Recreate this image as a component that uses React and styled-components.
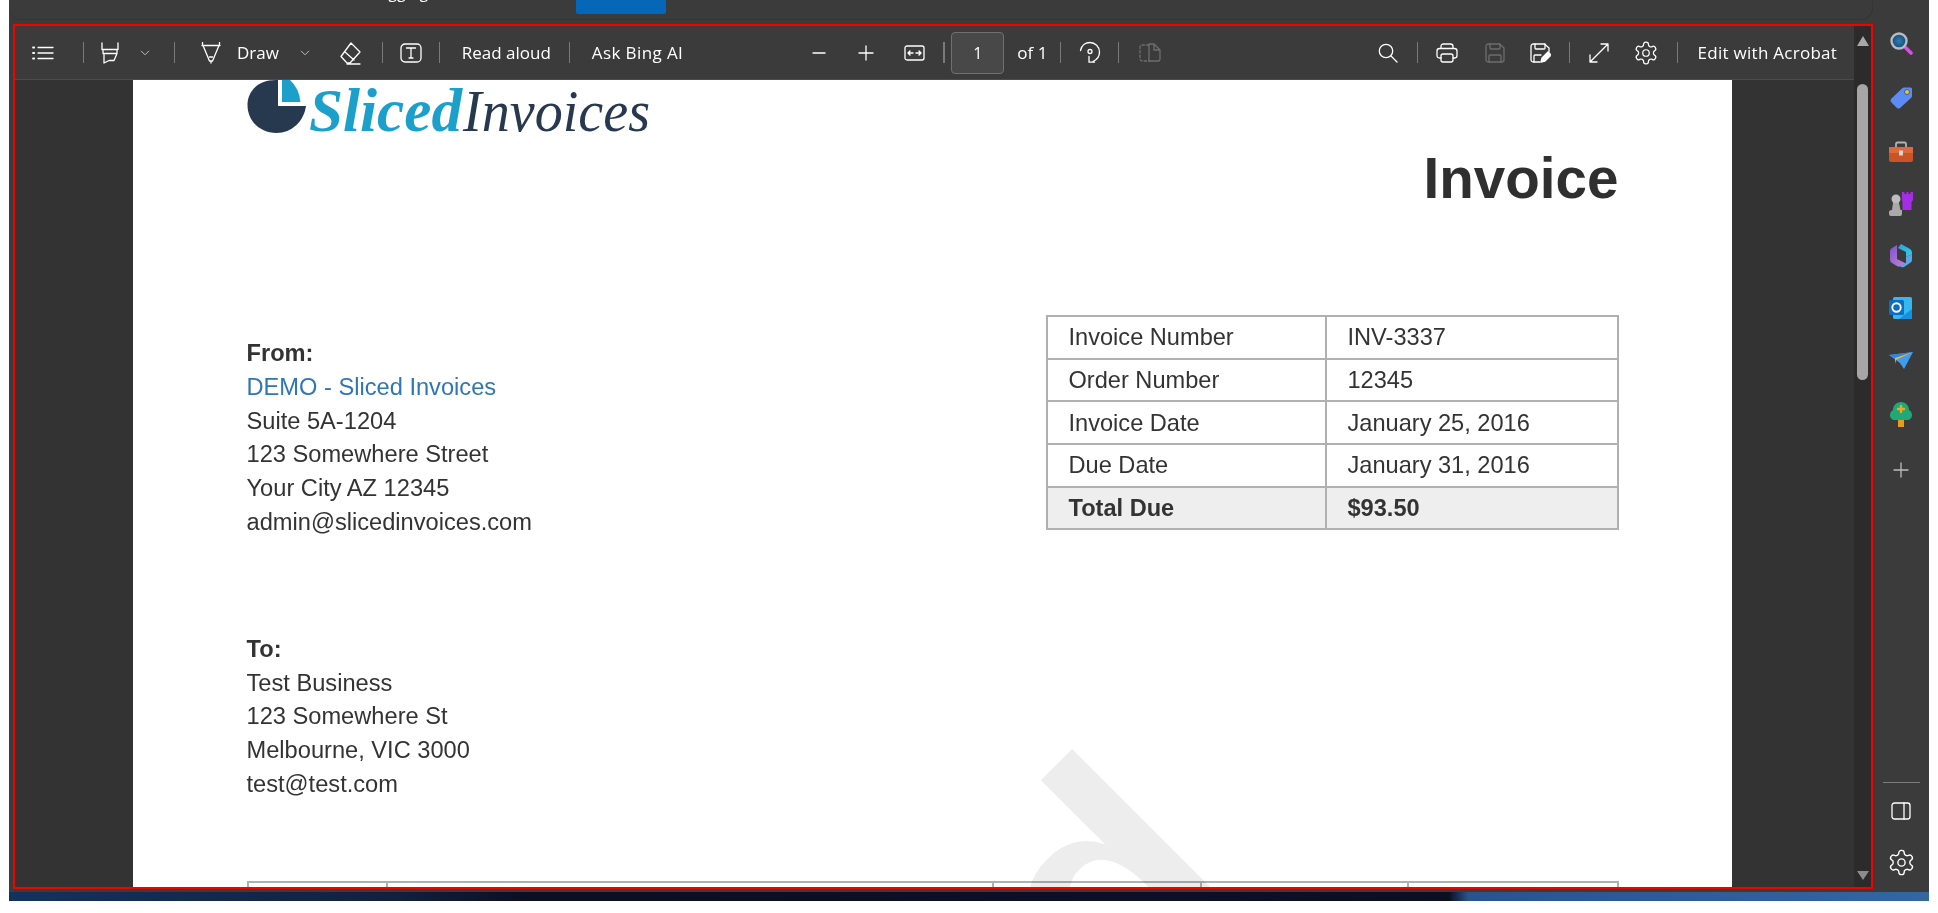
import React from "react";
import styled, { createGlobalStyle } from "styled-components";

const Global = createGlobalStyle`
  html, body { margin: 0; padding: 0; background: #fff; overflow: hidden; }
  #root { width: 1938px; height: 913px; }
`;

const Shell = styled.div`
  margin-left: 9px;
  width: 1920px;
  height: 901px;
  display: flex;
  flex-direction: column;
  overflow: hidden;
`;
const Upper = styled.div`
  height: 892px;
  display: flex;
  background: #3b3b3b;
`;
const LeftCol = styled.div`
  width: 1864px;
  display: flex;
  flex-direction: column;
`;
const TopStrip = styled.div`
  height: 20px;
  flex: none;
  margin-bottom: 4px;
  border-bottom: 1px solid #343434;
  border-right: 1px solid #343434;
  border-bottom-right-radius: 12px;
  border-bottom-left-radius: 12px;
  box-sizing: border-box;
  display: flex;
  overflow: hidden;
  position: relative;
`;
const TabText = styled.span`
  margin: -18px 0 0 339px;
  width: 228px;
  font: 16px/20px "Open Sans", sans-serif;
  color: #fff;
`;
const BlueTab = styled.div`
  width: 90px;
  height: 14px;
  background: #0667b8;
  border-radius: 0 0 2px 2px;
`;
const Frame = styled.div`
  margin-left: 4px;
  height: 865px;
  box-sizing: border-box;
  border: 2px solid #f40000;
  display: flex;
  background: #333;
`;
const MainCol = styled.div`
  flex: 1;
  min-width: 0;
  display: flex;
  flex-direction: column;
`;
const Toolbar = styled.div`
  height: 54px;
  flex: none;
  box-sizing: border-box;
  background: #3b3b3b;
  border-bottom: 1px solid #4c4c4c;
  display: flex;
  align-items: center;
  color: #fff;
  font: 17px/20px "Open Sans", sans-serif;
`;
const Tool = styled.span`
  flex: none;
  margin-left: ${(p) => p.$at}px;
  display: flex;
  color: ${(p) => (p.$off ? "#6e6e6e" : "#fff")};
`;
const Sep = styled.span`
  flex: none;
  margin-left: ${(p) => p.$at}px;
  width: ${(p) => p.$w || 1}px;
  height: 21px;
  background: #7a7a7a;
`;
const Label = styled.span`
  flex: none;
  margin-left: ${(p) => p.$at}px;
  width: ${(p) => p.$w}px;
  white-space: nowrap;
  letter-spacing: ${(p) => p.$ls || 0}px;
`;
const PageInput = styled.span`
  flex: none;
  margin-left: ${(p) => p.$at}px;
  width: 53px;
  height: 42px;
  box-sizing: border-box;
  background: #484848;
  border: 1px solid #707070;
  border-radius: 4px;
  display: flex;
  align-items: center;
  justify-content: center;
  font-size: 16px;
`;
const Viewer = styled.div`
  flex: 1;
  min-height: 0;
  padding: 0 122.5px 0 117.5px;
  background: #333;
  display: flex;
  overflow: hidden;
`;
const Page = styled.div`
  flex: 1;
  background: #fff;
  padding: 0 113px 0 114px;
  box-sizing: border-box;
  position: relative;
  overflow: hidden;
  font-family: "Liberation Sans", Arial, sans-serif;
  color: #333;
`;
const LogoSvg = styled.svg`
  display: block;
  width: 410px;
  height: 58px;
`;
const Title = styled.h1`
  margin: 9px 0 0;
  text-align: right;
  font: 700 56.600px/64px "Liberation Sans", Arial, sans-serif;
  color: #2f2f2f;
`;
const Columns = styled.div`
  margin-top: 104px;
  display: flex;
  justify-content: space-between;
  align-items: flex-start;
`;
const Address = styled.div`
  margin-top: ${(p) => p.$top || 0}px;
  font-size: 23.65px;
  line-height: 33.8px;
`;
const Strong = styled.div`
  font-weight: 700;
`;
const Link = styled.div`
  color: #2f76b5;
`;
const InfoTable = styled.table`
  width: 571px;
  border-collapse: collapse;
  font-size: 23.6px;
  line-height: 28px;
  table-layout: fixed;
`;
const Cell = styled.td`
  height: 42.7px;
  padding: 0 0 0 21px;
  box-sizing: border-box;
  border: 2px solid #b0b0b0;
  font-weight: ${(p) => (p.$total ? 700 : 400)};
  background: ${(p) => (p.$total ? "#eeeeee" : "#fff")};
`;
const Watermark = styled.div`
  position: absolute;
  left: 788px;
  top: 765px;
  font: 700 323px/1 "Liberation Sans", Arial, sans-serif;
  color: #ededed;
  white-space: nowrap;
  transform: rotate(-45deg);
  transform-origin: 0 0;
  mix-blend-mode: multiply;
  pointer-events: none;
`;
const ItemsTable = styled.div`
  margin-top: 79.500px;
  height: 40px;
  box-sizing: border-box;
  border: 2px solid #b0b0b0;
  border-bottom: none;
  display: grid;
  grid-template-columns: 137px 606px 208px 207px 1fr;
`;
const ItemCol = styled.div`
  border-left: ${(p) => (p.$first ? "none" : "2px solid #b0b0b0")};
`;
const Track = styled.div`
  width: 17px;
  flex: none;
  background: #2b2b2b;
  display: flex;
  flex-direction: column;
  align-items: center;
`;
const ArrowUp = styled.div`
  margin-top: 10px;
  width: 0;
  height: 0;
  border-left: 6.5px solid transparent;
  border-right: 6.5px solid transparent;
  border-bottom: 10px solid #a8a8a8;
`;
const Thumb = styled.div`
  margin-top: 38px;
  width: 11px;
  height: 296px;
  background: #a6a6a6;
  border-radius: 6px;
`;
const ArrowDown = styled.div`
  margin-top: auto;
  margin-bottom: 7px;
  width: 0;
  height: 0;
  border-left: 6.5px solid transparent;
  border-right: 6.5px solid transparent;
  border-top: 9px solid #8c8c8c;
`;
const Sidebar = styled.div`
  width: 56px;
  flex: none;
  display: flex;
  flex-direction: column;
  align-items: center;
`;
const SideIcon = styled.span`
  display: flex;
  flex: none;
  margin-top: ${(p) => p.$gap}px;
  margin-bottom: ${(p) => p.$bottom || 0}px;
  color: ${(p) => p.$color || "#fff"};
`;
const SideRule = styled.div`
  margin-top: auto;
  width: 37px;
  height: 1px;
  flex: none;
  background: #7c7c7c;
`;
const Wallpaper = styled.div`
  height: 9px;
  flex: none;
  background: linear-gradient(90deg, #13335c 0, #10213f 20%, #0a0f22 27%, #0a0f22 30%, #0b1028 60%, #0a0f22 75%, #27558a 76%, #33679e 100%);
`;

const S = (p) => (
  <svg width={p.w || 24} height={p.h || 24} viewBox={`0 0 ${p.w || 24} ${p.h || 24}`} fill="none" stroke="currentColor" strokeWidth={p.sw || 1.3} strokeLinecap="round" strokeLinejoin="round">
    {p.children}
  </svg>
);

const ListIcon = () => (
  <S w={22} h={18}>
    <path d="M1 3.5h1.2M1 9h1.2M1 14.5h1.2" strokeWidth="1.8" />
    <path d="M6 3.5h15M6 9h15M6 14.5h15" />
  </S>
);
const Highlighter = () => (
  <S w={20} h={22}>
    <path d="M2 1v6.5h16V1M3 7.5v4h14v-4M4 11.5V21l5-2.5h5l3-7" />
  </S>
);
const Chevron = () => (
  <svg width="10" height="6" viewBox="0 0 10 6" fill="none" stroke="#bdbdbd" strokeWidth="1">
    <path d="M1 .8l4 4 4-4" />
  </svg>
);
const Pen = () => (
  <S w={20} h={22}>
    <path d="M1 3.5h18M2 3.5L8.5 19h3L18 3.5M8.5 15h3M10 19v2M18.5 .5v3M1.5 .5v3" />
  </S>
);
const Eraser = () => (
  <S w={22} h={24}>
    <path d="M12 2l9 9-10 11H8L2 15.500zM6 11l9 8M8 23h13" />
  </S>
);
const TextBox = () => (
  <S w={22} h={20}>
    <rect x="1" y="1" width="20" height="18" rx="4" />
    <path d="M6.500 5h9M11 5v10M9 15h4" />
  </S>
);
const Minus = () => (
  <S w={14} h={4}>
    <path d="M1 2h12" />
  </S>
);
const Plus = () => (
  <S w={16} h={16}>
    <path d="M1 8h14M8 1v14" />
  </S>
);
const FitWidth = () => (
  <S w={21} h={16}>
    <rect x="1" y="1" width="19" height="14" rx="2" />
    <path d="M4 8h5M4 8l2-2M4 8l2 2M12 8h5M17 8l-2-2M17 8l-2 2" strokeWidth="1.400" />
  </S>
);
const Rotate = () => (
  <S w={22} h={23}>
    <path d="M1.500 9.500C2.500 4.500 6.500 1.500 11 1.500c5 0 9.500 4 9.500 9.500 0 4.500-3 8-6.500 9.500M10 15.500v5.700h5.500" />
    <circle cx="11" cy="10.500" r="2" />
  </S>
);
const TwoPages = () => (
  <S w={22} h={19}>
    <path d="M10 2H3.500Q1 2 1 4.500v11Q1 18 3.500 18H10" strokeDasharray="2.500 2" />
    <path d="M10 1v17h9.500Q21 18 21 16V7l-6-6z M15 1v6h6" />
  </S>
);
const Search = () => (
  <S w={20} h={20}>
    <circle cx="8" cy="8" r="6.700" />
    <path d="M13 13l6 6" />
  </S>
);
const Printer = () => (
  <S w={22} h={20}>
    <path d="M5 5.500V3.500Q5 1 7.500 1h7Q17 1 17 3.500v2M5 15H3.500Q1 15 1 12.500V8q0-2.500 2.500-2.500h15Q21 5.500 21 8v4.500q0 2.500-2.500 2.500H17" />
    <rect x="5" y="11" width="12" height="8" rx="2" />
  </S>
);
const Save = () => (
  <S w={20} h={20}>
    <path d="M3.500 1h11L19 5v11.500q0 2.500-2.500 2.500h-13Q1 19 1 16.500v-13Q1 1 3.500 1z" />
    <path d="M5 1v4q0 1 1 1h8q1 0 1-1V1M4 19v-6q0-1 1-1h10q1 0 1 1v6" />
  </S>
);
const SaveAs = () => (
  <S w={21} h={20}>
    <path d="M10 19H3.500Q1 19 1 16.500v-13Q1 1 3.500 1h11L19 5v4" />
    <path d="M5 1v4q0 1 1 1h8q1 0 1-1V1M4 19v-6q0-1 1-1h6" />
    <path d="M11 19l1-4 6-6 3 3-6 6z" fill="currentColor" />
  </S>
);
const Expand = () => (
  <S w={20} h={20}>
    <path d="M1 19L19 1M12 1h7v7M1 12v7h7" />
  </S>
);
const Gear = ({ size = 26 }) => (
  <svg width={size} height={size} viewBox="0 0 24 24" fill="none" stroke="currentColor" strokeWidth="1.150" strokeLinecap="round" strokeLinejoin="round">
    <path d="M12.220 2h-.44a2 2 0 0 0-2 2v.18a2 2 0 0 1-1 1.730l-.43.250a2 2 0 0 1-2 0l-.150-.080a2 2 0 0 0-2.730.730l-.220.380a2 2 0 0 0 .730 2.730l.150.100a2 2 0 0 1 1 1.720v.510a2 2 0 0 1-1 1.740l-.150.090a2 2 0 0 0-.730 2.730l.220.380a2 2 0 0 0 2.730.730l.150-.080a2 2 0 0 1 2 0l.430.250a2 2 0 0 1 1 1.730V20a2 2 0 0 0 2 2h.44a2 2 0 0 0 2-2v-.180a2 2 0 0 1 1-1.730l.430-.250a2 2 0 0 1 2 0l.150.080a2 2 0 0 0 2.730-.730l.220-.390a2 2 0 0 0-.730-2.730l-.150-.080a2 2 0 0 1-1-1.740v-.500a2 2 0 0 1 1-1.740l.150-.090a2 2 0 0 0 .730-2.730l-.220-.380a2 2 0 0 0-2.730-.730l-.150.080a2 2 0 0 1-2 0l-.430-.250a2 2 0 0 1-1-1.730V4a2 2 0 0 0-2-2z" />
    <circle cx="12" cy="12" r="3" />
  </svg>
);

const SearchColor = () => (
  <svg width="24" height="24" viewBox="0 0 24 24">
    <defs>
      <radialGradient id="lens"><stop offset="0" stopColor="#2c7fb0" /><stop offset="1" stopColor="#174a73" /></radialGradient>
    </defs>
    <path d="M15 15l7 7" stroke="#d153d8" strokeWidth="3.600" strokeLinecap="round" />
    <circle cx="10" cy="10" r="7.500" fill="url(#lens)" stroke="#b4bcc4" strokeWidth="2.400" />
  </svg>
);
const TagColor = () => (
  <svg width="24" height="24" viewBox="0 0 24 24">
    <path d="M15 1.500h6.500q1.500 0 1.500 1.500v7q0 1-1 2L11 22q-1.500 1-3 0l-6-6q-1-1.500 0-3L13 2.500q1-1 2-1z" fill="#5b8cf5" />
    <circle cx="18" cy="6" r="2.500" fill="#f2c51d" stroke="#3a5aa8" strokeWidth="1" />
  </svg>
);
const ToolboxColor = () => (
  <svg width="26" height="22" viewBox="0 0 26 22">
    <path d="M8 6V3q0-1.500 1.500-1.500h7Q18 1.500 18 3v3" fill="none" stroke="#b3b3b3" strokeWidth="1.800" />
    <rect x="1" y="6" width="24" height="15" rx="2" fill="#c85428" />
    <rect x="1" y="6" width="24" height="6" fill="#e0683a" />
    <rect x="11" y="9.500" width="4" height="5" fill="#d8d4cf" />
  </svg>
);
const ChessColor = () => (
  <svg width="26" height="26" viewBox="0 0 26 26">
    <path d="M14 1h2.500v2h2V1h2v2h2V1H25v8l-1.500 2v8h-9v-8L14 9z" fill="#a32ee6" />
    <circle cx="8" cy="8" r="4.500" fill="#bdbdbd" />
    <path d="M5 12h6l1.500 7H14v4q0 2-2 2H3q-2 0-2-2v-2q0-2 3-2z" fill="#a9a9a9" />
  </svg>
);
const CopilotColor = () => (
  <svg width="24" height="26" viewBox="0 0 24 26">
    <defs>
      <linearGradient id="cp1" x1="0" y1="0" x2="1" y2="1"><stop offset="0" stopColor="#2c9ee0" /><stop offset="1" stopColor="#35cfe0" /></linearGradient>
      <linearGradient id="cp2" x1="0" y1="0" x2="1" y2="1"><stop offset="0" stopColor="#7f50cc" /><stop offset="1" stopColor="#c58ad8" /></linearGradient>
    </defs>
    <path d="M12 1l9 5q2 1 2 4v1l-6 3V9L9 5z" fill="url(#cp1)" />
    <path d="M1 8q0-2 2-3l5-3v14l8 4 3-1-7 4q-2 1-4 0l-5-3q-2-1-2-3z" fill="url(#cp2)" />
    <path d="M23 11v6q0 2-2 3l-6 4q-2 .500-3 0l-1-1 6-3v-6z" fill="#5aa6e6" />
    <path d="M8 8l5 3 4-2v5l-5 3-4-2z" fill="#3b3b3b" />
  </svg>
);
const OutlookColor = () => (
  <svg width="24" height="24" viewBox="0 0 24 24">
    <rect x="4" y="1" width="19" height="22" rx="1.500" fill="#35b8f0" />
    <path d="M10 23l13-10v9q0 1-1 1z" fill="#1490df" />
    <rect x="0" y="4" width="15" height="15" rx="1.500" fill="#0a6fc2" />
    <circle cx="7.500" cy="11.500" r="4.200" fill="none" stroke="#fff" strokeWidth="1.900" />
  </svg>
);
const PlaneColor = () => (
  <svg width="24" height="18" viewBox="0 0 24 18">
    <path d="M0 3L24 0 15 17 11 11z" fill="#3f9cf0" />
    <path d="M0 3L24 0 6 6z" fill="#2f86df" />
    <path d="M6 6L24 0 7 8l-1 4z" fill="#f0b429" />
  </svg>
);
const TreeColor = () => (
  <svg width="22" height="26" viewBox="0 0 22 26">
    <rect x="8" y="17" width="6" height="8" fill="#e89c1c" />
    <path d="M11 0c5 0 8 4 8 8 2 1 3 3 3 5 0 3-2 5-5 5H5c-3 0-5-2-5-5 0-2 1-4 3-5 0-4 3-8 8-8z" fill="#1fa878" />
    <path d="M11 4v6M8 7h6" stroke="#f2a81e" strokeWidth="2.400" strokeLinecap="round" />
  </svg>
);
const PanelIcon = () => (
  <S w={20} h={18}>
    <rect x="1" y="1" width="18" height="16" rx="2.500" />
    <path d="M13 1v16" />
  </S>
);

const Logo = () => (
  <LogoSvg viewBox="0 0 410 58">
    <path d="M29 0h2V26h28C57 41 45 53 29.500 53 13 53 .5 41 .5 25 .5 12 10 0 29 0z" fill="#27394f" />
    <path d="M35 0H43Q52 8 53.500 22H35z" fill="#1ba0cc" />
    <text x="62" y="51" fontFamily="'Liberation Serif', serif" fontStyle="italic" fontWeight="700" fontSize="62" fill="#1ba0cc" textLength="153" lengthAdjust="spacingAndGlyphs">Sliced</text>
    <text x="216" y="51" fontFamily="'Liberation Serif', serif" fontStyle="italic" fontSize="60" fill="#27394f" textLength="187" lengthAdjust="spacingAndGlyphs">Invoices</text>
  </LogoSvg>
);

const rows = [
  ["Invoice Number", "INV-3337"],
  ["Order Number", "12345"],
  ["Invoice Date", "January 25, 2016"],
  ["Due Date", "January 31, 2016"],
  ["Total Due", "$93.50", true],
];

export default function App() {
  return (
    <>
      <Global />
      <Shell>
        <Upper>
          <LeftCol>
            <TopStrip>
              <TabText>Debugging</TabText>
              <BlueTab />
            </TopStrip>
            <Frame>
              <MainCol>
                <Toolbar>
                  <Tool $at={17}><ListIcon /></Tool>
                  <Sep $at={29} />
                  <Tool $at={16}><Highlighter /></Tool>
                  <Tool $at={20}><Chevron /></Tool>
                  <Sep $at={24} />
                  <Tool $at={26}><Pen /></Tool>
                  <Label $at={16} $w={44}>Draw</Label>
                  <Tool $at={18.500}><Chevron /></Tool>
                  <Tool $at={29}><Eraser /></Tool>
                  <Sep $at={21.500} />
                  <Tool $at={16.800}><TextBox /></Tool>
                  <Sep $at={17.600} />
                  <Label $at={21.400} $w={92}>Read aloud</Label>
                  <Sep $at={15.600} />
                  <Label $at={21.400} $w={93} $ls={0.4}>Ask Bing AI</Label>
                  <Tool $at={127}><Minus /></Tool>
                  <Tool $at={32}><Plus /></Tool>
                  <Tool $at={30}><FitWidth /></Tool>
                  <Sep $at={18} $w={2} />
                  <PageInput $at={6.600}>1</PageInput>
                  <Label $at={13} $w={27}>of 1</Label>
                  <Sep $at={15.600} />
                  <Tool $at={17.800}><Rotate /></Tool>
                  <Sep $at={17} />
                  <Tool $at={20.200} $off><TwoPages /></Tool>
                  <Tool $at={216.800}><Search /></Tool>
                  <Sep $at={18.800} />
                  <Tool $at={18}><Printer /></Tool>
                  <Tool $at={27} $off><Save /></Tool>
                  <Tool $at={25.400}><SaveAs /></Tool>
                  <Sep $at={18} />
                  <Tool $at={18.700}><Expand /></Tool>
                  <Tool $at={24}><Gear /></Tool>
                  <Sep $at={18} />
                  <Label $at={20} $w={142} $ls={0.27}>Edit with Acrobat</Label>
                </Toolbar>
                <Viewer>
                  <Page>
                    <Logo />
                    <Title>Invoice</Title>
                    <Columns>
                      <div>
                        <Address $top={22}>
                          <Strong>From:</Strong>
                          <Link>DEMO - Sliced Invoices</Link>
                          <div>Suite 5A-1204</div>
                          <div>123 Somewhere Street</div>
                          <div>Your City AZ 12345</div>
                          <div>admin@slicedinvoices.com</div>
                        </Address>
                        <Address $top={93}>
                          <Strong>To:</Strong>
                          <div>Test Business</div>
                          <div>123 Somewhere St</div>
                          <div>Melbourne, VIC 3000</div>
                          <div>test@test.com</div>
                        </Address>
                      </div>
                      <InfoTable>
                        <colgroup>
                          <col width="279" />
                          <col width="292" />
                        </colgroup>
                        <tbody>
                          {rows.map(([a, b, t]) => (
                            <tr key={a}>
                              <Cell $total={t}>{a}</Cell>
                              <Cell $total={t}>{b}</Cell>
                            </tr>
                          ))}
                        </tbody>
                      </InfoTable>
                    </Columns>
                    <ItemsTable>
                      <ItemCol $first />
                      <ItemCol />
                      <ItemCol />
                      <ItemCol />
                      <ItemCol />
                    </ItemsTable>
                    <Watermark>d</Watermark>
                  </Page>
                </Viewer>
              </MainCol>
              <Track>
                <ArrowUp />
                <Thumb />
                <ArrowDown />
              </Track>
            </Frame>
          </LeftCol>
          <Sidebar>
            <SideIcon $gap={31}><SearchColor /></SideIcon>
            <SideIcon $gap={31}><TagColor /></SideIcon>
            <SideIcon $gap={31}><ToolboxColor /></SideIcon>
            <SideIcon $gap={28}><ChessColor /></SideIcon>
            <SideIcon $gap={26}><CopilotColor /></SideIcon>
            <SideIcon $gap={27}><OutlookColor /></SideIcon>
            <SideIcon $gap={32}><PlaneColor /></SideIcon>
            <SideIcon $gap={32}><TreeColor /></SideIcon>
            <SideIcon $gap={34} $color="#bdbdbd"><Plus /></SideIcon>
            <SideRule />
            <SideIcon $gap={19}><PanelIcon /></SideIcon>
            <SideIcon $gap={28} $bottom={15}><Gear size={29} /></SideIcon>
          </Sidebar>
        </Upper>
        <Wallpaper />
      </Shell>
    </>
  );
}
